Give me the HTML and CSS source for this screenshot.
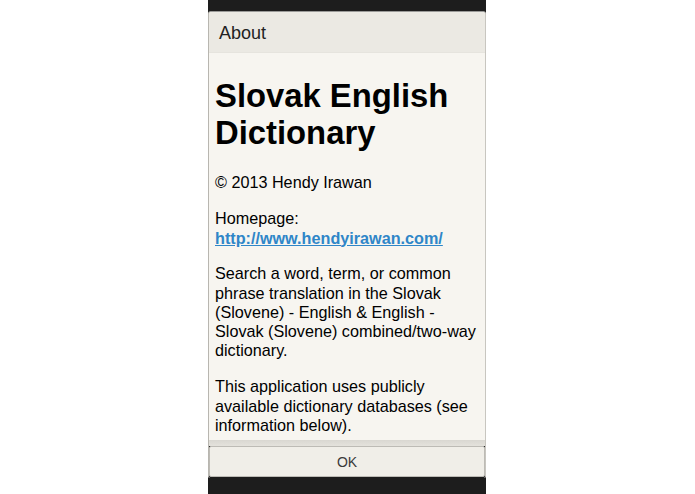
FILE: index.html
```html
<!DOCTYPE html>
<html>
<head>
<meta charset="utf-8">
<link rel="stylesheet" href="styles.css">
</head>
<body>
<div class="device">
  <div class="dialog">
    <div class="titlebar">About</div>
    <div class="content">
      <h1 class="app-title">Slovak English Dictionary</h1>
      <p class="para">© 2013 Hendy Irawan</p>
      <p class="para">Homepage:<br><a class="link" href="#">http://www.hendyirawan.com/</a></p>
      <p class="para">Search a word, term, or common phrase translation in the Slovak (Slovene) - English &amp; English - Slovak (Slovene) combined/two-way dictionary.</p>
      <p class="para">This application uses publicly available dictionary databases (see information below).</p>
    </div>
    <div class="footer">
      <div class="ok-button">OK</div>
    </div>
  </div>
</div>
</body>
</html>
```

FILE: styles.css
```css
html, body {
  margin: 0;
  padding: 0;
  background: #ffffff;
}

body {
  font-family: "Liberation Sans", Arial, sans-serif;
}

.device {
  width: 278px;
  height: 494px;
  margin-left: 208px;
  box-sizing: border-box;
  background: #1d1d1d;
  padding-top: 11px;
  padding-bottom: 16px;
  display: flex;
  flex-direction: column;
}

.dialog {
  flex: 1;
  display: flex;
  flex-direction: column;
  border-top: 1px solid #9a9a98;
  border-left: 1px solid #b8b6b0;
  border-right: 1px solid #c8c6c0;
  border-radius: 3px 3px 2px 2px;
  background: #f7f5f0;
  overflow: hidden;
  min-height: 0;
}

.titlebar {
  height: 41px;
  flex: none;
  box-sizing: border-box;
  background: #ebe9e3;
  border-bottom: 1px solid #e6e4de;
  color: #222;
  font-size: 18px;
  line-height: 40px;
  padding-left: 10px;
  padding-top: 1px;
}

.content {
  flex: 1;
  min-height: 0;
  overflow: hidden;
  padding: 25px 6px 0 6px;
  color: #000;
  font-size: 16.2px;
  line-height: 19.3px;
}

.app-title {
  margin: 0 0 22px;
  font-size: 32.8px;
  line-height: 36.7px;
  font-weight: bold;
}

.para {
  margin: 0 0 16.5px;
}

.link {
  color: #2f86c8;
  font-weight: bold;
  text-decoration: underline;
}

.footer {
  flex: none;
  height: 38px;
  box-sizing: border-box;
  background: linear-gradient(#d9d7d1, #e4e2dc 6px, #1d1d1d 6px);
  padding: 6px 0 1px;
}

.ok-button {
  height: 31px;
  box-sizing: border-box;
  border: 1px solid #bdbbb5;
  border-radius: 2px;
  background: #f0eee8;
  color: #3a3a3a;
  font-size: 14px;
  line-height: 31px;
  text-align: center;
}
```
